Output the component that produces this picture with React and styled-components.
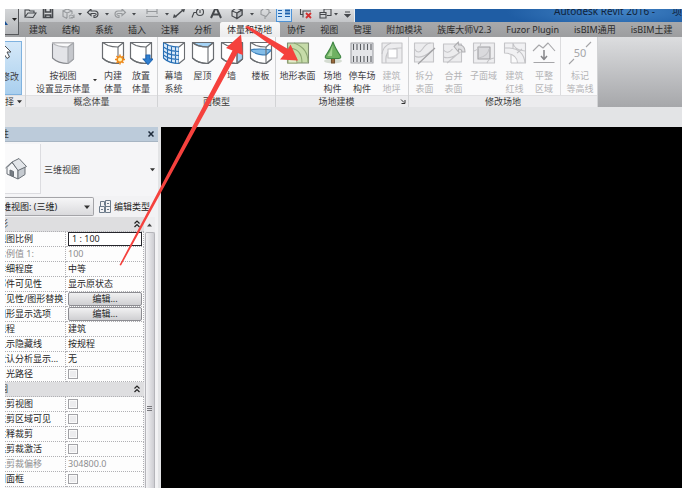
import React from "react";
import styled, { createGlobalStyle } from "styled-components";

const GlobalStyle = createGlobalStyle`
  * { box-sizing: border-box; }
  body {
    margin: 0;
    background: #fff;
    color: #3c3c3c;
    font: 9px/13px "Noto Sans", "Noto Sans CJK SC", sans-serif;
  }
  button, input, select { font: inherit; color: inherit; margin: 0; }
  button { border: 0; padding: 0; background: none; }
  svg { display: block; flex: none; }
`;

const Page = styled.div`
  height: 100vh;
  padding: 9px 6px 6px 5px;
`;

const Window = styled.div`
  position: relative;
  height: 100%;
  display: flex;
  flex-direction: column;
  overflow: hidden;
  background: #e3e4e6;
`;

/* ---------- title and tabs ---------- */

const Top = styled.header`
  display: flex;
  flex: none;
  height: 28px;
  background: #a0a1a3;
`;

const AppButton = styled.button`
  width: 14px;
  height: 26px;
  flex: none;
  display: flex;
  align-items: center;
  justify-content: flex-end;
  background: linear-gradient(#d4d6d8, #b3b5b8);
  border: solid #56585b;
  border-width: 0 1px 1px 0;
`;

const TopRows = styled.div`
  flex: 1;
  min-width: 0;
`;

const TitleBar = styled.div`
  display: flex;
  height: 13px;
  background: #1f5da4;
  overflow: hidden;
`;

const QuickTools = styled.div`
  flex: none;
  width: 336px;
  padding-left: 4px;
  display: flex;
  justify-content: flex-start;
  background: linear-gradient(#dcdee0, #c3c5c8);
  border-right: 1px solid #e9edf1;
`;

const ToolButton = styled.button`
  width: ${(p) => p.$w}px;
  flex: none;
  height: 13px;
  display: flex;
  align-items: center;
  justify-content: center;
  color: ${(p) => (p.$dim ? "#96999c" : "#45484c")};
  ${(p) => p.$on && "background: #cfe4f7; border: solid #4d92d6; border-width: 0 1px 1px;"}
`;

const TitleText = styled.div`
  flex: 1;
  display: flex;
  justify-content: flex-end;
  gap: 17px;
  overflow: hidden;
  white-space: nowrap;
  font-size: 10px;
  line-height: 5px;
  color: #10233a;
  background: radial-gradient(ellipse 110px 18px at 80% 20%, #4384c6, #1f5da4);
`;

const Tabs = styled.nav`
  display: flex;
  height: 15px;
  padding-left: 3px;
  background: linear-gradient(#a8a9ab, #9c9d9f);
`;

const Tab = styled.button`
  flex: none;
  height: 15px;
  padding: 0 8px 0 7px;
  line-height: 16px;
  white-space: nowrap;
  color: #2b2b2b;
  ${(p) => p.$on && "background: linear-gradient(#f8f8f8, #ececed); border-radius: 2px 2px 0 0;"}
`;

/* ---------- ribbon ---------- */

const Ribbon = styled.div`
  flex: none;
  display: flex;
  height: 70px;
  background: linear-gradient(#dcdddf, #a6a7aa);
`;

const Panel = styled.section`
  flex: none;
  width: ${(p) => p.$w}px;
  display: flex;
  flex-direction: column;
  background: #fafafb;
  border-right: 1px solid #d2d3d5;
`;

const PanelTools = styled.div`
  flex: 1;
  display: flex;
  padding: 4px 0 0 ${(p) => p.$pad || 0}px;
`;

const PanelTitle = styled.div`
  height: 12px;
  line-height: 12px;
  display: flex;
  justify-content: center;
  align-items: center;
  gap: 3px;
  white-space: nowrap;
  background: #ececee;
  border-top: 1px solid #e0e0e2;
`;

const TitleLabel = styled.span`
  flex: 1;
  text-align: center;
`;

const RibbonButton = styled.button`
  flex: none;
  width: ${(p) => p.$w}px;
  height: 54px;
  display: flex;
  flex-direction: column;
  align-items: center;
  white-space: nowrap;
  color: ${(p) => (p.$off ? "#b4b4b6" : "#414144")};
  svg { margin-bottom: 4px; }
`;

const ModifyButton = styled(RibbonButton)`
  width: 17px;
  background: linear-gradient(#d5e8f8, #a9cfee);
  border: solid #7fb2df;
  border-width: 1px 1px 1px 0;
  overflow: hidden;
  padding-right: 6px;
`;

const DropMark = styled.span`
  width: 6px;
  padding-top: 37px;
`;

const Divider = styled.span`
  width: 1px;
  height: 58px;
  margin: -4px 3px 0 2px;
  background: #dcdcde;
`;

/* ---------- body ---------- */

const Body = styled.div`
  flex: 1;
  min-height: 0;
  display: flex;
  gap: 3px;
  padding-top: 20px;
`;

const Palette = styled.aside`
  flex: none;
  width: 153px;
  display: flex;
  flex-direction: column;
  background: #f2f2f4;
  overflow: hidden;
`;

const PaletteTitle = styled.div`
  flex: none;
  display: flex;
  justify-content: space-between;
  height: 15px;
  line-height: 14px;
  padding-right: 4px;
  background: #bccbda;
  border-bottom: 1px solid #a7b5c3;
`;

const Clipped = styled.span`
  margin-left: ${(p) => -p.$by}px;
  white-space: nowrap;
`;

const TypeSelector = styled.button`
  flex: none;
  display: flex;
  align-items: center;
  height: 54px;
  padding-right: 3px;
  background: #f5f5f7;
  text-align: left;
`;

const Thumb = styled.span`
  width: 36px;
  height: 50px;
  display: flex;
  align-items: center;
  border: solid #dcdce0;
  border-width: 0 1px 1px 0;
  background: #fafafb;
`;

const TypeName = styled.span`
  flex: 1;
  padding-left: 3px;
`;

const FilterRow = styled.div`
  flex: none;
  display: flex;
  align-items: center;
  gap: 5px;
  height: 21px;
  overflow: hidden;
`;

const FilterBox = styled.div`
  flex: none;
  display: flex;
  align-items: center;
  width: 89px;
  height: 19px;
  padding-right: 3px;
  border: solid #a4a4a8;
  border-width: 1px 1px 1px 0;
  border-radius: 0 2px 2px 0;
  background: linear-gradient(#f6f6f7, #dadadd);
  overflow: hidden;
`;

const FilterSelect = styled.select`
  flex: 1;
  min-width: 0;
  margin-left: -12px;
  padding: 0;
  border: 0;
  background: none;
  appearance: none;
  color: #222;
`;

const EditType = styled.button`
  display: flex;
  align-items: center;
  gap: 3px;
  white-space: nowrap;
  color: #222;
`;

const Grid = styled.div`
  flex: 1;
  min-height: 0;
  display: flex;
`;

const Table = styled.table`
  flex: none;
  width: 139px;
  height: max-content;
  table-layout: fixed;
  border-collapse: separate;
  border-spacing: 0;
  background: #fdfdfd;
`;

const Section = styled.th`
  height: 15px;
  padding: 0;
  line-height: 14px;
  font-weight: 400;
  background: #dedee0;
  border-bottom: 1px dotted #b0b0b4;
`;

const SectionButton = styled.button`
  display: flex;
  width: 100%;
  height: 14px;
  align-items: center;
  justify-content: space-between;
  padding-right: 4px;
`;

const Name = styled.th`
  width: 61px;
  height: 15px;
  padding: 0;
  line-height: 14px;
  font-weight: 400;
  text-align: left;
  white-space: nowrap;
  overflow: hidden;
  color: ${(p) => (p.$off ? "#8e8e90" : "#262626")};
  border: dotted #b0b0b4;
  border-width: 0 1px 1px 0;
`;

const Value = styled.td`
  height: 15px;
  padding: 0 1px 0 2px;
  line-height: 14px;
  white-space: nowrap;
  color: ${(p) => (p.$off ? "#8e8e90" : "#262626")};
  border: dotted #b0b0b4;
  border-width: 0 1px 1px 0;
`;

const Field = styled.input`
  display: block;
  width: 100%;
  height: 14px;
  padding: 0;
  border: 0;
  outline: 0;
  background: none;
  color: inherit;
`;

const ScaleField = styled(Field)`
  padding-left: 3px;
  border: 1px solid #26262c;
  background: #fff;
`;

const EditButton = styled.button`
  display: block;
  width: 100%;
  height: 14px;
  line-height: 12px;
  border: 1px solid #8d8d92;
  border-radius: 2px;
  background: linear-gradient(#f1f1f2, #cfcfd2);
`;

const Check = styled.input`
  display: block;
  appearance: none;
  width: 10px;
  height: 10px;
  border: 1px solid #a2a2a6;
  background: #ececee;
  box-shadow: inset 0 0 0 1px #fafafa;
`;

const Scroll = styled.div`
  width: 11px;
  display: flex;
  flex-direction: column;
  align-items: center;
  background: #eeeef0;
`;

const ScrollUp = styled.button`
  height: 15px;
  display: flex;
  align-items: center;
`;

const ScrollThumb = styled.div`
  flex: 1;
  width: 10px;
  display: flex;
  align-items: center;
  justify-content: center;
  padding-top: 96px;
  border: 1px solid #b5b5ba;
  border-bottom: 0;
  border-radius: 2px 2px 0 0;
  background: linear-gradient(90deg, #f3f3f5, #cdcdd2);
`;

const Canvas = styled.main`
  flex: 1;
  background: #000;
`;

const Pointers = styled.svg`
  position: absolute;
  left: 0;
  top: 0;
  pointer-events: none;
`;

/* ---------- icons ---------- */

const Down = ({ s = 5 }) => (
  <svg width={s} height={s} viewBox="0 0 6 6"><path d="M0 1.5h6L3 5z" fill="#333" /></svg>
);

const QIcon = ({ w = 14, children }) => (
  <svg width={w} height="13" viewBox={`0 0 ${w} 13`} fill="none" stroke="currentColor" strokeWidth="1.1">
    {children}
  </svg>
);

const Dot = () => <QIcon w={4}><path d="M0 4h4L2 6.500z" fill="currentColor" stroke="none" /></QIcon>;

const quick = [
  [14, <QIcon><path d="M2 8V1h4l1 1h4v2M2 8l3-4h8l-3 4.500z" /></QIcon>],
  [22, <QIcon><path d="M2.500 0v8.500h9V0M4.500 0v3h5V0M4.500 8.500V6h5v2.500" strokeWidth="1.600" /></QIcon>],
  [18, <QIcon><path d="M2 2l4-2 5 2v3M6 9.500L2 7.500V2l4 2 5-2M6 4v5" /><path d="M13 5.500v3H10M8 7.500q2-3 4.500 0M8 9l4 0" /></QIcon>, 1],
  [6, <Dot />],
  [20, <QIcon><path d="M1.500 3.500L5 0v2h4c4 0 4 6 0 6.500H8V6.500c3 0 2.500-2 1-2H5v2z" /></QIcon>],
  [8, <Dot />],
  [18, <QIcon><path d="M12.500 3.500L9 0v2H5c-4 0-4 6 0 6.500h1V6.500c-3 0-2.500-2-1-2h4v2z" /></QIcon>, 1],
  [10, <Dot />],
  [26, <QIcon><path d="M1 7.500h12M2 0v5M12 0v5M2 2.500h10" /></QIcon>, 1],
  [4, <Dot />],
  [20, <QIcon><path d="M3 8L11 1" strokeWidth="1.500" /><path d="M1 9l1-4 3 3zM13 0l-4 .5 3 3z" fill="currentColor" stroke="none" /></QIcon>],
  [18, <QIcon><circle cx="9" cy="3" r="3.500" /><path d="M1 8.500l2-5h2M9 1v3" /></QIcon>],
  [17, <QIcon><path d="M2 9L6.500-1h1L12 9M4 5.500h6" strokeWidth="2" /></QIcon>],
  [26, <QIcon><path d="M2 2l4-3 6 2v5L7 9.500 2 7zM2 2l5 2 5-3M7 4v5" /><path d="M7 4l5-3v5L7 9.500z" fill="#b9bcc0" /></QIcon>],
  [4, <Dot />],
  [22, <QIcon><path d="M3 2l3-3 5 2v3L8 7.500 3 5.500zM7 10V7.500M11 3.500h2" /></QIcon>, 1],
  [16, <QIcon><path d="M1 1.500h4M1 4.500h4M1 7.500h4M8 7.500h5" stroke="#1e62ac" /><path d="M8 1.500h5M8 4.500h5" stroke="#1e62ac" strokeWidth="2" /></QIcon>, 0, 1],
  [28, <QIcon><path d="M1.500 0v5.500h3M4 8.500V2h8" /><path d="M7 4l5 5M12 4l-5 5" stroke="#d32f2f" strokeWidth="1.800" /></QIcon>],
  [12, <QIcon><path d="M1 9V3.500h6V9zM5 3.500V0h7v6.500H8M1 5.500h6" /></QIcon>],
  [8, <Dot />],
  [15, <QIcon w={7}><path d="M1 3h5M1 5.500h5L3.500 8z" fill="currentColor" /></QIcon>],
];

const Ico = ({ children, off }) => (
  <svg width="24" height="24" viewBox="0 0 24 24" fill="none" stroke={off ? "#c4c4c7" : "#6a6d71"} strokeWidth="1.100" strokeLinejoin="round">
    {children}
  </svg>
);

const OUT = "M1.500 1.500L7 4.500Q11 6 17 6L22.500 1.500V18L17 22.500Q7 22.500 1.500 17Z";
const Mass = ({ children, over }) => (
  <Ico>
    <path d="M1.500 1.500H22.500V18L17 22.500Q7 22.500 1.500 17Z" fill="#fff" />
    {children}
    <path d={OUT} />
    <path d="M17 6v16.500" />
    {over}
  </Ico>
);

const icons = {
  show: (
    <Ico>
      <path d="M1.500 2H22.500V18L17 22.500Q7 22.500 1.500 17Z" fill="#e3e4e8" stroke="#85878c" />
      <path d="M1.500 2Q6 6 17 6L22.500 2z" fill="#fafafb" stroke="#b7b8bc" />
      <path d="M17 6L22.500 2V18L17 22.500z" fill="#c5c7cc" stroke="#a5a7ab" />
    </Ico>
  ),
  inplace: (
    <Mass
      over={<g stroke="#ee8a1d" strokeWidth="1.500"><path d="M19 13.500v10M14 18.500h10M15.500 15l7 7M22.500 15l-7 7" /><circle cx="19" cy="18.500" r="2.800" fill="#fff3b0" /></g>}
    />
  ),
  place: (
    <Mass over={<path d="M17 14h4v4h3l-5 5.500-5-5.500h3z" fill="#2f7fd0" stroke="#1f66b4" />} />
  ),
  curtain: (
    <Ico>
      <path d="M1.500 1.500L7 4.500Q11 6 17 6V22.500Q7 22.500 1.500 17Z" fill="#dcebf9" stroke="#286fb5" />
      <path d="M17 6L22.500 1.500V18L17 22.500" fill="#fff" />
      <path d="M1.500 1.500h21" />
      <path d="M5.500 4v16M9.500 5.500v16M13.500 6v16.500M1.500 6q6 4.500 15.500 4.500M1.500 10q6 4.500 15.500 4.500M1.500 14q6 4.500 15.500 4.500" stroke="#286fb5" />
    </Ico>
  ),
  roof: <Mass><path d="M1.500 1.500H22.500L17 6Q6 6 1.500 1.500z" fill="#a5d3f5" /></Mass>,
  wall: <Mass><path d="M17 6L22.500 1.500V18L17 22.500z" fill="#a5d3f5" /></Mass>,
  floor: (
    <Mass>
      <path d="M1.500 9Q9 7 22.500 9L17 14Q6 14 1.500 9z" fill="#83bde8" stroke="#3a7fba" />
    </Mass>
  ),
  terrain: (
    <Ico>
      <path d="M1.500 2h21v20h-21z" fill="#c6dba9" stroke="#7f8d72" />
      <path d="M2 7q14 0 14 15M8 2q14 5 14 19" stroke="#8ba671" />
      <path d="M2 12q9 1 9 10H2z" fill="#e2ecca" stroke="#9bab78" />
    </Ico>
  ),
  tree: (
    <Ico>
      <ellipse cx="12" cy="20" rx="9" ry="2.500" fill="#d5dcd2" stroke="none" />
      <path d="M10.500 16h3v6h-3z" fill="#9a6a3c" stroke="#70502f" />
      <path d="M12 1Q14 7 19.500 15q1 2.500-2 2.500h-11q-3 0-2-2.500Q10 7 12 1z" fill="#6fb162" stroke="#3f8544" />
      <path d="M11.500 4Q10 10 6.500 15H11z" fill="#a3d492" stroke="none" />
    </Ico>
  ),
  parking: (
    <Ico>
      <path d="M1 2h22v20H1z" fill="#e4e5e8" stroke="#a0a2a6" />
      <path d="M3.500 3v6M7 3v6M10.500 3v6M14 3v6M17.500 3v6M21 3v6M3.500 15v6M7 15v6M10.500 15v6M14 15v6M17.500 15v6M21 15v6" stroke="#5a5d61" />
    </Ico>
  ),
  pad: (
    <Ico off>
      <path d="M2 2h20v20H2z" fill="#ececee" />
      <path d="M2 13Q3 5 11 2M6 22q-2-16 16-15" />
      <path d="M8 8h9v9H8z" fill="#fff" />
    </Ico>
  ),
  split: (
    <Ico off>
      <path d="M1.500 2h19v19h-19z" fill="#ececee" /><path d="M1.500 8q4 6 8 0t8-6M1.500 15q7 4 18-6" /><path d="M22 7L5 23" stroke="#a0a0a3" />
    </Ico>
  ),
  merge: (
    <Ico off>
      <path d="M1.500 3h18v18h-18z" fill="#ececee" /><path d="M1.500 9q4 5 9-1M1.500 16q7 3 17-5M5 22L18 11" />
      <path d="M12 5.500L16.500 1v3h2q4.500 1 4.500 7h-3q0-3-3.500-3v3z" fill="#e0e0e2" stroke="#b0b0b3" />
    </Ico>
  ),
  region: (
    <Ico off>
      <path d="M1.500 2h21v20h-21z" fill="#eeeef0" /><path d="M6 6h12v12H6z" fill="#dadadd" stroke="#a0a0a3" /><path d="M2 10q6-2 7-8M7 17q9-2 10-9M15 22q1-4 7-5" />
    </Ico>
  ),
  property: (
    <Ico off>
      <path d="M1.500 2h21v20h-8q0-9-13-10z" fill="#f1f1f3" />
      <path d="M1.500 7h5q14 1 15.500 15M10 2v5.500M10 2q1 7 12 8M14 12l5-4M8 14v8M8 22h6" />
    </Ico>
  ),
  graded: (
    <Ico off>
      <path d="M1 10l6-6 4 3 5-5 7 8M1.500 21.500h21" stroke="#a6a6a9" /><path d="M12 9v9M9 15l3 3.500 3-3.500" stroke="#87878a" strokeWidth="1.500" />
    </Ico>
  ),
  contour: (
    <Ico off>
      <path d="M1 23l5-5M18 6l5-5" stroke="#a4a4a7" />
      <text x="12" y="16" textAnchor="middle" fontSize="11" fill="#a6a6a9" stroke="none">50</text>
    </Ico>
  ),
};

const Tool = ({ w, icon, lines, off }) => (
  <RibbonButton $w={w} $off={off} disabled={off}>
    {icons[icon]}
    {lines.map((t) => <span key={t}>{t}</span>)}
  </RibbonButton>
);

const Tools = ({ items }) => items.map(([w, icon, lines, off]) => <Tool key={icon} w={w} icon={icon} lines={lines} off={off} />);

const tabs = ["建筑", "结构", "系统", "插入", "注释", "分析", "体量和场地", "协作", "视图", "管理", "附加模块", "族库大师V2.3", "Fuzor Plugin", "isBIM通用", "isBIM土建"];

const rows = [
  { section: "图形" },
  { name: "视图比例", kind: "scale", value: "1 : 100" },
  { name: "比例值 1:", kind: "text", value: "100", off: true },
  { name: "详细程度", kind: "text", value: "中等" },
  { name: "部件可见性", kind: "text", value: "显示原状态" },
  { name: "可见性/图形替换", kind: "edit" },
  { name: "图形显示选项", kind: "edit" },
  { name: "规程", kind: "text", value: "建筑" },
  { name: "显示隐藏线", kind: "text", value: "按规程" },
  { name: "默认分析显示...", kind: "text", value: "无" },
  { name: "日光路径", kind: "check" },
  { section: "范围" },
  { name: "裁剪视图", kind: "check" },
  { name: "裁剪区域可见", kind: "check" },
  { name: "注释裁剪", kind: "check" },
  { name: "远剪裁激活", kind: "check" },
  { name: "远剪裁偏移", kind: "text", value: "304800.0", off: true },
  { name: "剖面框", kind: "check" },
];

const Editor = ({ id, row }) => {
  if (row.kind === "scale") return <ScaleField id={id} defaultValue={row.value} />;
  if (row.kind === "edit") return <EditButton id={id}>编辑...</EditButton>;
  if (row.kind === "check") return <Check id={id} type="checkbox" />;
  return <Field id={id} defaultValue={row.value} disabled={row.off} />;
};

const Collapse = () => (
  <svg width="6" height="8" viewBox="0 0 6 8" fill="none" stroke="#222" strokeWidth="1.200"><path d="M.5 3.500L3 1l2.500 2.500M.5 7L3 4.500 5.500 7" /></svg>
);

export default function App() {
  return (
    <Page>
      <GlobalStyle />
      <Window>
        <Top>
          <AppButton aria-label="应用程序菜单">
            <svg width="13" height="25" viewBox="0 0 13 25"><path d="M0 12l3 4H0z" fill="#174f94" /><path d="M7 9h5l-2.500 3z" fill="#222" /></svg>
          </AppButton>
          <TopRows>
            <TitleBar>
              <QuickTools>
                {quick.map(([w, icon, dim, on], i) => (
                  <ToolButton key={i} $w={w} $dim={dim} $on={on}>{icon}</ToolButton>
                ))}
              </QuickTools>
              <TitleText><span>Autodesk Revit 2016 -</span><span>项</span></TitleText>
            </TitleBar>
            <Tabs>
              {tabs.map((t) => <Tab key={t} $on={t === "体量和场地"}>{t}</Tab>)}
            </Tabs>
          </TopRows>
        </Top>

        <Ribbon>
          <Panel $w={21}>
            <PanelTools>
              <ModifyButton>
                <svg width="12" height="24" viewBox="0 0 12 24"><path d="M0 3l7 7H3l2.500 5-2.500 1.500L0 12z" fill="#fff" stroke="#4c4f53" /></svg>
                <span>修改</span>
              </ModifyButton>
            </PanelTools>
            <PanelTitle><Clipped $by={12}>选择</Clipped><Down /></PanelTitle>
          </Panel>
          <Panel $w={132}>
            <PanelTools $pad={7}>
              <Tool w={60} icon="show" lines={["按视图", "设置显示体量"]} />
              <DropMark><Down s={4} /></DropMark>
              <Tools items={[[28, "inplace", ["内建", "体量"]], [28, "place", ["放置", "体量"]]]} />
            </PanelTools>
            <PanelTitle>概念体量</PanelTitle>
          </Panel>
          <Panel $w={118}>
            <PanelTools $pad={1}>
              <Tools items={[[29, "curtain", ["幕墙", "系统"]], [29, "roof", ["屋顶"]], [29, "wall", ["墙"]], [29, "floor", ["楼板"]]]} />
            </PanelTools>
            <PanelTitle>面模型</PanelTitle>
          </Panel>
          <Panel $w={133}>
            <PanelTools $pad={2}>
              <Tools items={[[39, "terrain", ["地形表面"]], [31, "tree", ["场地", "构件"]], [28, "parking", ["停车场", "构件"]], [31, "pad", ["建筑", "地坪"], true]]} />
            </PanelTools>
            <PanelTitle>
              <TitleLabel>场地建模</TitleLabel>
              <svg width="8" height="8" viewBox="0 0 8 8" fill="none" stroke="#333"><path d="M1 1.500l3 3M5 2v3.500H1.500" /></svg>
            </PanelTitle>
          </Panel>
          <Panel $w={189}>
            <PanelTools $pad={1}>
              <Tools items={[[29, "split", ["拆分", "表面"], true], [29, "merge", ["合并", "表面"], true], [31, "region", ["子面域"], true], [31, "property", ["建筑", "红线"], true], [28, "graded", ["平整", "区域"], true]]} />
              <Divider />
              <Tool w={32} icon="contour" lines={["标记", "等高线"]} off />
            </PanelTools>
            <PanelTitle>修改场地</PanelTitle>
          </Panel>
        </Ribbon>

        <Body>
          <Palette>
            <PaletteTitle>
              <Clipped $by={14}>属性</Clipped>
              <button aria-label="关闭">
                <svg width="6" height="6" viewBox="0 0 6 6" stroke="#1d2a3a" strokeWidth="1.500"><path d="M.5.5l5 5M5.500.5l-5 5" /></svg>
              </button>
            </PaletteTitle>
            <TypeSelector>
              <Thumb>
                <svg width="22" height="24" viewBox="0 0 22 24" stroke="#6a7077" strokeWidth="1" strokeLinejoin="round">
                  <path d="M2 10.500l5-5 6 7.500v9l-11-5z" fill="#f4f5f7" />
                  <path d="M13 13l7-3v7.500l-7 4.500z" fill="#c5cad0" />
                  <path d="M7 5L14 1.500l7.500 8-8.500 4z" fill="#e2e5e9" />
                  <path d="M7 5L.5 11" fill="none" />
                  <path d="M5 13l3.500 1.500v5L5 18z" fill="#777d84" />
                </svg>
              </Thumb>
              <TypeName>三维视图</TypeName>
              <Down />
            </TypeSelector>
            <FilterRow>
              <FilterBox>
                <FilterSelect aria-label="属性过滤器" defaultValue="v"><option value="v">三维视图: (三维)</option></FilterSelect>
                <Down s={6} />
              </FilterBox>
              <EditType>
                <svg width="12" height="14" viewBox="0 0 12 14" fill="none" stroke="#6d7b8a"><path d="M1.500 6.500V1.500h4v4M6.500 .5h5v12h-5zM.5 6.500h5v6h-5zM2 9.500h2M8 3.500h2M6.500 6.500h5M8 9.500h2" /></svg>
                编辑类型
              </EditType>
            </FilterRow>
            <Grid>
              <Table>
                <colgroup><col width="61" /><col /></colgroup>
                <tbody>
                  {rows.map((r, i) =>
                    r.section ? (
                      <tr key={i}>
                        <Section colSpan={2}>
                          <SectionButton><Clipped $by={15}>{r.section}</Clipped><Collapse /></SectionButton>
                        </Section>
                      </tr>
                    ) : (
                      <tr key={i}>
                        <Name scope="row" $off={r.off}><Clipped as="label" htmlFor={`p${i}`} $by={8}>{r.name}</Clipped></Name>
                        <Value $off={r.off}><Editor id={`p${i}`} row={r} /></Value>
                      </tr>
                    )
                  )}
                </tbody>
              </Table>
              <Scroll>
                <ScrollUp aria-label="向上滚动"><svg width="5" height="4" viewBox="0 0 5 4"><path d="M0 3.500h5L2.500.5z" fill="#444" /></svg></ScrollUp>
                <ScrollThumb><svg width="5" height="7" viewBox="0 0 5 7" stroke="#77777c"><path d="M0 1.500h5M0 3.500h5M0 5.500h5" /></svg></ScrollThumb>
              </Scroll>
            </Grid>
          </Palette>
          <Canvas aria-label="三维视图" />
        </Body>

        <Pointers width="320" height="270" viewBox="5 9 320 270" fill="#f5413d">
          <path d="M119.500 265L232.500 50.500 226 48 241 34.500 243 55 237.500 53 121 265.500z" />
          <path d="M245 27L248 26 288 49 290.500 44.500 298 60.500 280 59.500 284 54.500z" />
        </Pointers>
      </Window>
    </Page>
  );
}
